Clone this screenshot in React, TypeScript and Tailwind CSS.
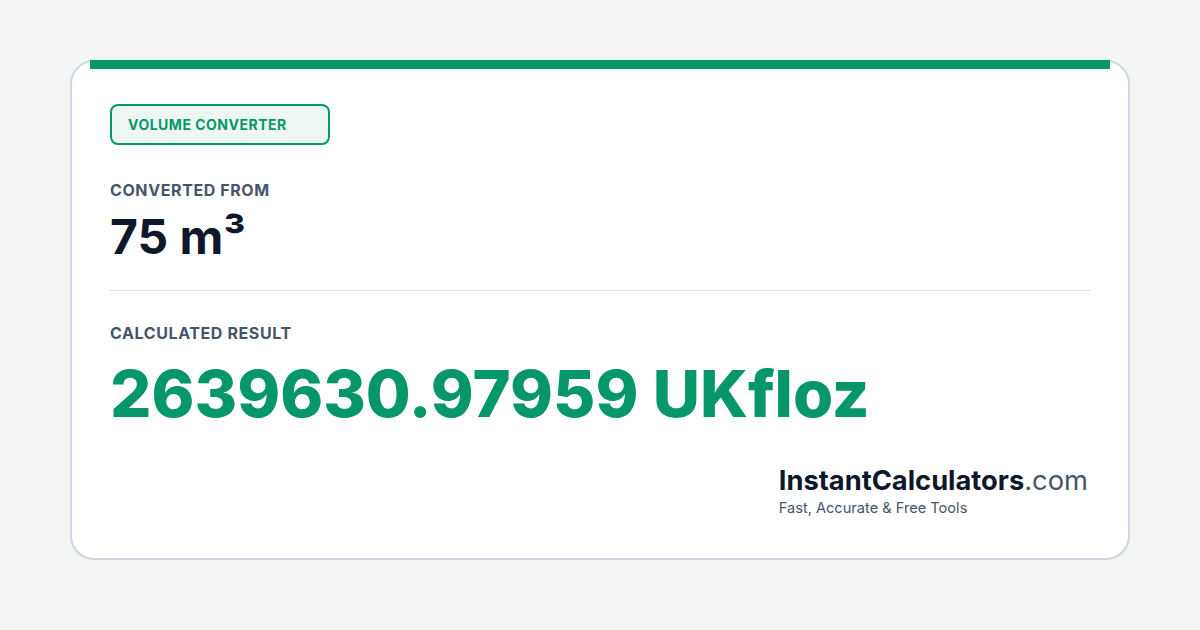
import React from "react";

const font = { fontFamily: "Inter, 'Noto Sans', sans-serif" };

export default function App() {
  return (
    <div className="w-[1200px] h-[630px] bg-[#f3f5f4] pt-[60px] px-[70px]" style={font}>
      <div className="relative h-[500px] bg-white border-2 border-[#cdd6e2] rounded-[24px] px-[38px] pt-[42px]">
        {/* accent bar */}
        <div className="absolute top-[-2px] left-[18px] right-[18px] h-[9px] bg-[#05966a]" />

        <div className="inline-flex items-center h-[41px] w-[220px] px-[16px] rounded-[8px] border-2 border-[#05966a] bg-[#edf7f2]">
          <span className="text-[14px] font-bold text-[#05966a] tracking-[0.5px]">VOLUME CONVERTER</span>
        </div>

        <div className="mt-[35px] text-[16px] leading-[20px] font-bold text-[#475569] tracking-[0.6px]">CONVERTED FROM</div>
        <div className="mt-[9px] text-[48px] leading-[56px] font-bold text-[#0f172a]">75 m³</div>

        <div className="mt-[25px] h-px bg-[#d5dde6]" />

        <div className="mt-[32px] text-[16px] leading-[20px] font-bold text-[#475569] tracking-[0.6px]">CALCULATED RESULT</div>
        <div className="mt-[13px] text-[65px] leading-[76px] font-extrabold text-[#05966a]">
          2639630.97959 UKfloz
        </div>

        <div className="flex justify-end mt-[33px] pr-[2px]">
          <div className="flex flex-col">
            <div className="text-[27.3px] leading-[32px] text-[#0f172a]">
              <span className="font-bold">InstantCalculators</span>
              <span className="font-normal text-[#475569]">.com</span>
            </div>
            <div className="mt-[2px] text-[14.6px] leading-[18px] text-[#475569]">Fast, Accurate &amp; Free Tools</div>
          </div>
        </div>
      </div>
    </div>
  );
}
